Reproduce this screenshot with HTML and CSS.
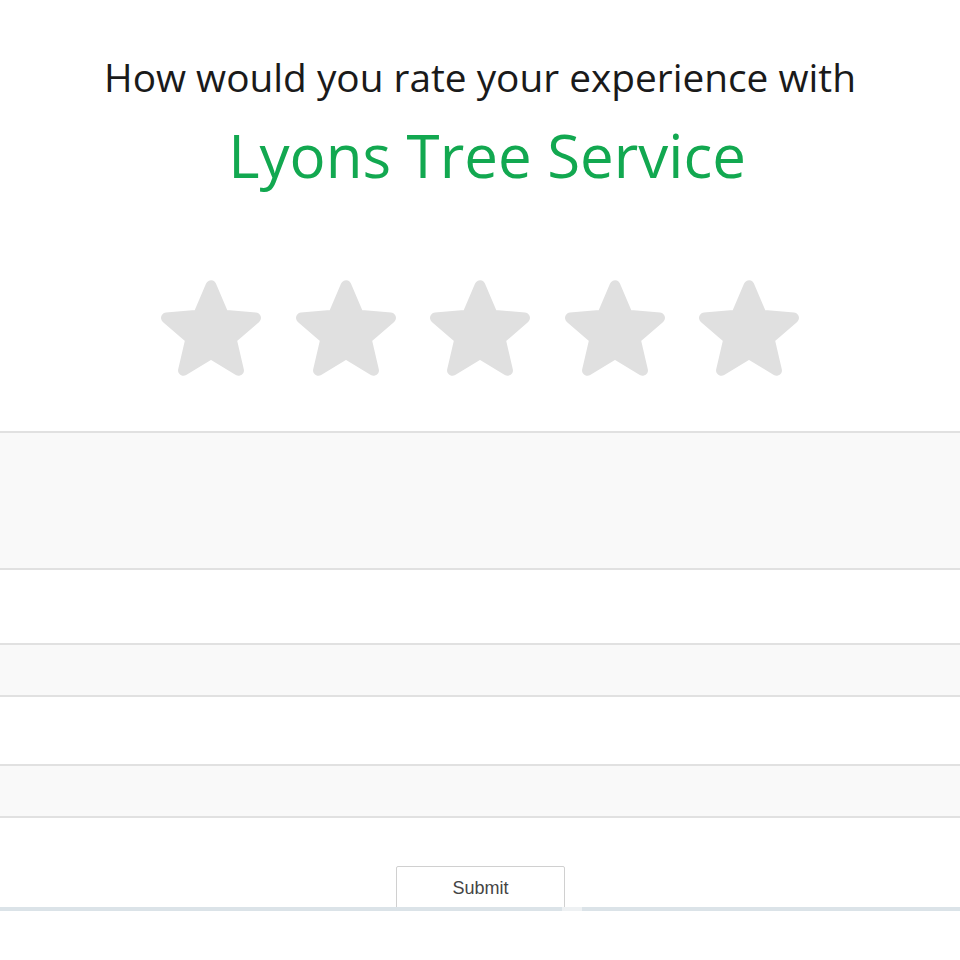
FILE: index.html
```html
<!DOCTYPE html>
<html lang="en">
<head>
<meta charset="utf-8">
<title>Rate your experience</title>
<link rel="stylesheet" href="styles.css">
</head>
<body>
<main class="survey">
  <h1 class="question">How would you rate your experience with</h1>
  <h2 class="company">Lyons Tree Service</h2>
  <div class="stars">
    <button class="star" type="button" aria-label="1 star"><svg viewBox="0.8 0.8 22.4 21.4" width="100" height="98"><path d="M12 17.27L18.18 21l-1.64-7.03L22 9.24l-7.19-.61L12 2 9.19 8.63 2 9.24l5.46 4.73L5.82 21z"/></svg></button>
    <button class="star" type="button" aria-label="2 stars"><svg viewBox="0.8 0.8 22.4 21.4" width="100" height="98"><path d="M12 17.27L18.18 21l-1.64-7.03L22 9.24l-7.19-.61L12 2 9.19 8.63 2 9.24l5.46 4.73L5.82 21z"/></svg></button>
    <button class="star" type="button" aria-label="3 stars"><svg viewBox="0.8 0.8 22.4 21.4" width="100" height="98"><path d="M12 17.27L18.18 21l-1.64-7.03L22 9.24l-7.19-.61L12 2 9.19 8.63 2 9.24l5.46 4.73L5.82 21z"/></svg></button>
    <button class="star" type="button" aria-label="4 stars"><svg viewBox="0.8 0.8 22.4 21.4" width="100" height="98"><path d="M12 17.27L18.18 21l-1.64-7.03L22 9.24l-7.19-.61L12 2 9.19 8.63 2 9.24l5.46 4.73L5.82 21z"/></svg></button>
    <button class="star" type="button" aria-label="5 stars"><svg viewBox="0.8 0.8 22.4 21.4" width="100" height="98"><path d="M12 17.27L18.18 21l-1.64-7.03L22 9.24l-7.19-.61L12 2 9.19 8.63 2 9.24l5.46 4.73L5.82 21z"/></svg></button>
  </div>
  <form class="feedback">
    <textarea class="field field-message" aria-label="Comments"></textarea>
    <input class="field field-line" type="text" aria-label="Name">
    <input class="field field-line field-second" type="text" aria-label="Email">
    <div class="actions">
      <button class="submit" type="submit">Submit</button>
    </div>
    <div class="rule"></div>
  </form>
</main>
</body>
</html>
```

FILE: styles.css
```css
html, body {
  margin: 0;
  padding: 0;
  background: #ffffff;
}

.survey {
  font-family: "Open Sans", "Liberation Sans", sans-serif;
  display: flex;
  flex-direction: column;
  align-items: center;
  padding-top: 52px;
}

.question {
  margin: 0;
  font-size: 38.8px;
  font-weight: 400;
  line-height: 50px;
  color: #1a1a1a;
}

.company {
  margin: 17px 0 0 14px;
  font-size: 60px;
  font-weight: 400;
  line-height: 72px;
  color: #12a850;
}

.stars {
  display: flex;
  gap: 34.5px;
  margin-top: 88px;
}

.star {
  border: 0;
  padding: 0;
  margin: 0;
  background: none;
  display: block;
  cursor: pointer;
}

.star svg {
  display: block;
}

.star path {
  fill: #e0e0e0;
  stroke: #e0e0e0;
  stroke-width: 2.4;
  stroke-linejoin: round;
}

.feedback {
  align-self: stretch;
  display: flex;
  flex-direction: column;
  margin-top: 54px;
}

.field {
  display: block;
  box-sizing: border-box;
  width: 100%;
  margin: 0;
  padding: 0;
  border: 0;
  border-top: 2px solid #e1e1e1;
  border-bottom: 2px solid #e1e1e1;
  background: #f9f9f9;
  outline: none;
  resize: none;
}

.field-message {
  height: 139px;
}

.field-line {
  height: 54px;
  margin-top: 73px;
}

.field-second {
  margin-top: 67px;
}

.actions {
  display: flex;
  justify-content: center;
  padding-top: 48px;
}

.submit {
  box-sizing: border-box;
  width: 169px;
  height: 44px;
  margin-left: 1px;
  border: 1px solid #d0d0d0;
  border-radius: 2px;
  background: #ffffff;
  font-family: "Liberation Sans", Arial, sans-serif;
  font-size: 18px;
  color: #444444;
  cursor: pointer;
}

.rule {
  position: relative;
  height: 4px;
  margin-top: -3px;
  background: linear-gradient(to right, #dbe3e8 0, #dbe3e8 562px, #eef1f3 562px, #eef1f3 582px, #dbe3e8 582px);
}
```
